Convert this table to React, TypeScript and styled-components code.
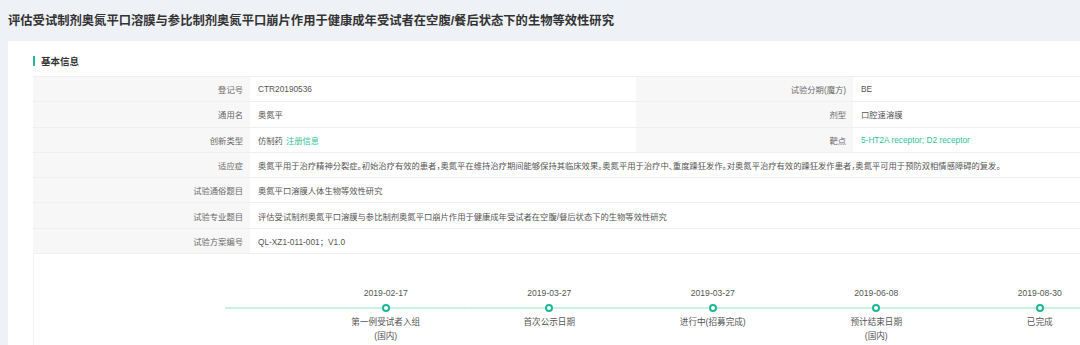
import React from "react";
import styled, { createGlobalStyle } from "styled-components";

const Global = createGlobalStyle`
  body {
    margin: 0;
    background: #eef1f5;
    overflow: hidden;
    font-family: "Liberation Sans", "Noto Sans CJK SC", sans-serif;
  }
`;

const Page = styled.div`
  width: 1120px;
  height: 345px;
  overflow: hidden;
`;

const Title = styled.h1`
  margin: 0;
  height: 41px;
  padding-left: 8px;
  display: flex;
  align-items: center;
  font-size: 12.3px;
  font-weight: bold;
  color: #333;
  padding-bottom: 2px;
  box-sizing: border-box;
`;

const Card = styled.section`
  margin-left: 8px;
  background: #fff;
  padding: 13px 0 0 25px;
  height: 304px;
  box-sizing: border-box;
`;

const Heading = styled.h2`
  margin: 0 0 9px;
  height: 13px;
  display: flex;
  align-items: center;
  gap: 6px;
  font-size: 9.5px;
  font-weight: bold;
  color: #333;
  &::before {
    content: "";
    width: 2px;
    height: 10px;
    background: #22b993;
  }
`;

const Table = styled.div`
  display: grid;
  grid-template-columns: 217px 386px 217px 1fr;
  border-top: 1px solid #efefef;
  font-size: 8.3px;
`;

const Cell = styled.div<{ $label?: boolean; $wide?: boolean; $halfPunct?: boolean }>`
  height: 25.3px;
  box-sizing: border-box;
  border-bottom: 1px solid #efefef;
  display: flex;
  align-items: center;
  justify-content: ${(p) => (p.$label ? "flex-end" : "flex-start")};
  padding: ${(p) => (p.$label ? "0 7px 0 0" : "0 0 0 8px")};
  background: ${(p) => (p.$label ? "#f7f7f7" : "#fff")};
  color: ${(p) => (p.$label ? "#6a6a6a" : "#555")};
  grid-column: ${(p) => (p.$wide ? "span 3" : "auto")};
  font-feature-settings: ${(p) => (p.$halfPunct ? '"halt"' : "normal")};
  white-space: nowrap;
`;

const Link = styled.span`
  color: #2fbf9b;
  margin-left: 3px;
`;

const LinkText = styled.span`
  color: #2fbf9b;
`;

const Timeline = styled.div`
  border-left: 1px solid #f2f2f2;
  height: 92px;
  padding: 33px 0 0 191px;
  box-sizing: border-box;
  display: flex;
  align-items: flex-start;
`;

const Lead = styled.div`
  width: 79px;
  margin-top: 20px;
  height: 2px;
  background: #cbeee5;
  flex-shrink: 0;
`;

const Step = styled.div`
  width: 163.5px;
  display: flex;
  flex-direction: column;
  align-items: center;
  font-size: 8.6px;
  color: #555;
  flex-shrink: 0;
`;

const Date = styled.div`
  height: 12px;
  line-height: 12px;
`;

const Track = styled.div`
  align-self: stretch;
  height: 10px;
  margin-top: 4px;
  display: flex;
  align-items: center;
  justify-content: center;
  background: linear-gradient(#cbeee5, #cbeee5) center / 100% 2px no-repeat;
`;

const Dot = styled.span`
  width: 8px;
  height: 8px;
  box-sizing: border-box;
  border-radius: 50%;
  border: 2px solid #1db795;
  background: #fff;
`;

const Label = styled.div`
  margin-top: 2px;
  line-height: 14px;
  text-align: center;
  color: #555;
`;

type Row = {
  label: string;
  value: React.ReactNode;
  label2?: string;
  value2?: React.ReactNode;
  halfPunct?: boolean;
};

const rows: Row[] = [
  { label: "登记号", value: "CTR20190536", label2: "试验分期(魔方)", value2: "BE" },
  { label: "通用名", value: "奥氮平", label2: "剂型", value2: "口腔速溶膜" },
  {
    label: "创新类型",
    value: (
      <>
        仿制药<Link>注册信息</Link>
      </>
    ),
    label2: "靶点",
    value2: <LinkText>5-HT2A receptor; D2 receptor</LinkText>,
  },
  {
    label: "适应症",
    value:
      "奥氮平用于治疗精神分裂症。初始治疗有效的患者，奥氮平在维持治疗期间能够保持其临床效果。奥氮平用于治疗中、重度躁狂发作。对奥氮平治疗有效的躁狂发作患者，奥氮平可用于预防双相情感障碍的复发。",
    halfPunct: true,
  },
  { label: "试验通俗题目", value: "奥氮平口溶膜人体生物等效性研究" },
  {
    label: "试验专业题目",
    value: "评估受试制剂奥氮平口溶膜与参比制剂奥氮平口崩片作用于健康成年受试者在空腹/餐后状态下的生物等效性研究",
  },
  { label: "试验方案编号", value: "QL-XZ1-011-001；V1.0" },
];

const steps = [
  { date: "2019-02-17", label: "第一例受试者入组", sub: "(国内)" },
  { date: "2019-03-27", label: "首次公示日期" },
  { date: "2019-03-27", label: "进行中(招募完成)" },
  { date: "2019-06-08", label: "预计结束日期", sub: "(国内)" },
  { date: "2019-08-30", label: "已完成" },
];

export default function App() {
  return (
    <Page>
      <Global />
      <Title>评估受试制剂奥氮平口溶膜与参比制剂奥氮平口崩片作用于健康成年受试者在空腹/餐后状态下的生物等效性研究</Title>
      <Card>
        <Heading>基本信息</Heading>
        <Table>
          {rows.map((r) => (
            <React.Fragment key={r.label}>
              <Cell $label>{r.label}</Cell>
              <Cell $wide={!r.label2} $halfPunct={r.halfPunct}>
                {r.value}
              </Cell>
              {r.label2 && (
                <>
                  <Cell $label>{r.label2}</Cell>
                  <Cell>{r.value2}</Cell>
                </>
              )}
            </React.Fragment>
          ))}
        </Table>
        <Timeline>
          <Lead />
          {steps.map((s, i) => (
            <Step key={i}>
              <Date>{s.date}</Date>
              <Track>
                <Dot />
              </Track>
              <Label>
                {s.label}
                {s.sub && <br />}
                {s.sub}
              </Label>
            </Step>
          ))}
        </Timeline>
      </Card>
    </Page>
  );
}
